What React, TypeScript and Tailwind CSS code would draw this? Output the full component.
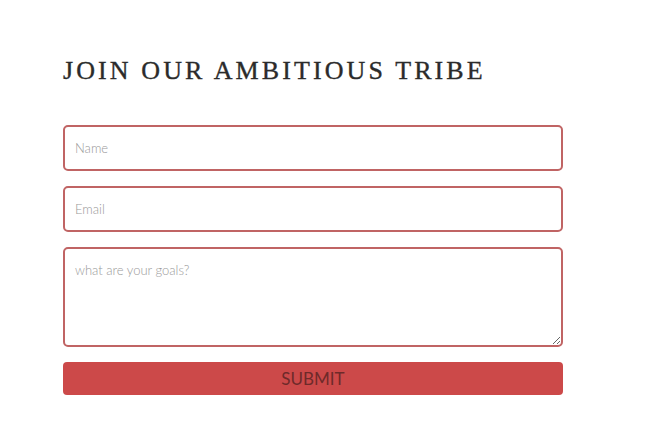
import React from "react";

export default function App() {
  return (
    <div className="w-[649px] h-[441px] bg-white">
      <div className="pl-[63px] pt-[56px] w-[563px]">
        <h2
          className="text-[26px] leading-[30px] text-[#2b2b2b] tracking-[3.1px] whitespace-nowrap [-webkit-text-stroke:0.35px_#2b2b2b]"
          style={{ fontFamily: '"Liberation Serif", "DejaVu Serif", serif' }}
        >
          JOIN OUR AMBITIOUS TRIBE
        </h2>
        <form
          className="mt-[39px] flex flex-col gap-[15px] w-[500px]"
          style={{ fontFamily: '"Lato", "Open Sans", sans-serif' }}
          onSubmit={(e) => e.preventDefault()}
        >
          <input
            placeholder="Name"
            className="h-[46px] w-full border-2 border-[#c06464] rounded-[5px] px-[10px] text-[13px] font-light placeholder:text-[#999999] outline-none"
          />
          <input
            placeholder="Email"
            className="h-[46px] w-full border-2 border-[#c06464] rounded-[5px] px-[10px] text-[13px] font-light placeholder:text-[#999999] outline-none"
          />
          <textarea
            placeholder="what are your goals?"
            className="h-[100px] w-full border-2 border-[#c06464] rounded-[5px] px-[10px] pt-[12px] text-[13px] font-light placeholder:text-[#999999] outline-none resize-y block"
          />
          <button
            type="submit"
            className="h-[33px] w-full bg-[#cc4949] rounded-[4px] text-[#6e2a2a] text-[17px] leading-[33px]"
          >
            SUBMIT
          </button>
        </form>
      </div>
    </div>
  );
}
